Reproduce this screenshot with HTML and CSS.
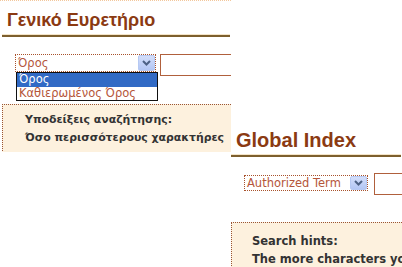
FILE: index.html
```html
<!DOCTYPE html>
<html lang="el">
<head>
    <meta charset="UTF-8">
    <meta name="viewport" content="width=device-width, initial-scale=1.0">
    <title>Ευρετήριο / Index</title>
    <!--styling the web-->
    <link rel="stylesheet" href="styles.css">
</head>
<body>
    <main class="stage">
        <!--greek shot-->
        <section class="panel panel-gr">
            <div class="top-rule"></div>
            <h1 class="title">Γενικό Ευρετήριο</h1>
            <div class="search">
                <div class="select">
                    <span class="select-text">Όρος</span>
                    <span class="arrow">
                        <svg width="9" height="6" viewBox="0 0 9 6"><path d="M1 1 L4.5 4.5 L8 1" fill="none" stroke="#4d6185" stroke-width="2"/></svg>
                    </span>
                    <ul class="options">
                        <li class="opt sel">Όρος</li>
                        <li class="opt">Καθιερωμένος Όρος</li>
                    </ul>
                </div>
                <input type="text" class="term">
            </div>
            <div class="hints">
                <p>Υποδείξεις αναζήτησης:</p>
                <p>Όσο περισσότερους χαρακτήρες</p>
            </div>
        </section>

        <!--english shot-->
        <section class="panel panel-en">
            <h1 class="title">Global Index</h1>
            <div class="search">
                <div class="select select-en">
                    <span class="select-text">Authorized Term</span>
                    <span class="arrow">
                        <svg width="9" height="6" viewBox="0 0 9 6"><path d="M1 1 L4.5 4.5 L8 1" fill="none" stroke="#4d6185" stroke-width="2"/></svg>
                    </span>
                </div>
                <input type="text" class="term">
            </div>
            <div class="hints">
                <p>Search hints:</p>
                <p>The more characters you</p>
            </div>
        </section>
    </main>
</body>
</html>
```

FILE: styles.css
```css
*{
    margin:0;
    padding:0;
    box-sizing: border-box;
}
body{
    background: #ffffff;
    width: 402px;
    height: 267px;
    overflow: hidden;
}
.stage{
    display: grid;
    grid-template-columns: 229px 173px;
    align-items: start;
}
.panel{
    overflow: hidden;
}
.panel-gr{
    width: 231px;
    height: 152px;
    grid-column: 1;
    grid-row: 1;
}
.panel-en{
    grid-column: 2;
    grid-row: 1;
    margin-top: 121px;
    height: 146px;
}
.top-rule{
    border-top: 1px dotted #f2c79c;
}
.title{
    font-family: "Liberation Sans", Arial, sans-serif;
    font-size: 18px;
    font-weight: bold;
    line-height: 24px;
    color: #8b3a12;
    margin: 0 1px 0 2px;
    padding: 7px 0 3px 5px;
    border-bottom: 2px solid #7d5f2e;
    box-shadow: inset 0 -1px 0 #f4e5c9;
    white-space: nowrap;
}
.panel-en .title{
    font-size: 20px;
    padding-top: 7px;
}
.search{
    display: flex;
    align-items: flex-start;
    margin: 17px 0 0 15px;
}
.select{
    position: relative;
    flex-shrink: 0;
    width: 141px;
    height: 18px;
    border: 1px dotted #a8522c;
    display: flex;
    align-items: center;
    justify-content: space-between;
    padding-left: 2px;
    font-family: "DejaVu Sans", Verdana, sans-serif;
    font-size: 11.5px;
    color: #b5563a;
}
.select-en{
    width: 124px;
    height: 16px;
    margin-top: 1px;
}
.select-text{
    white-space: nowrap;
}
.arrow{
    width: 17px;
    height: 100%;
    background: linear-gradient(#d3defb, #b3c6f4);
    border: 1px solid #b6c9f3;
    border-radius: 2px;
    display: flex;
    align-items: center;
    justify-content: center;
}
.options{
    list-style: none;
    position: absolute;
    top: 17px;
    left: 0;
    width: 142px;
    border: 1px solid #111111;
    background: #ffffff;
    z-index: 5;
}
.opt{
    height: 13px;
    line-height: 13px;
    padding-left: 2px;
    white-space: nowrap;
}
.opt.sel{
    background: #316ac5;
    color: #ffffff;
    height: 14px;
}
.term{
    flex-shrink: 0;
    width: 110px;
    height: 22px;
    margin-left: 4px;
    border: 1px solid #b0603c;
    background: #ffffff;
}
.select-en + .term{
    margin-left: 6px;
    margin-top: -1px;
}
.hints{
    margin: 28px 0 0 2px;
    height: 49px;
    background: #fdf1de;
    border-top: 1px dotted #9a5534;
    border-left: 1px dotted #9a5534;
    padding: 6px 0 0 22px;
}
.hints p{
    font-family: "DejaVu Sans", Verdana, sans-serif;
    font-size: 10.9px;
    font-weight: bold;
    line-height: 18px;
    color: #333333;
    white-space: nowrap;
}
.panel-en .hints{
    height: 60px;
    padding: 9px 0 0 20px;
    margin-top: 27px;
}
.panel-en .hints p{
    font-size: 11.5px;
}
```
